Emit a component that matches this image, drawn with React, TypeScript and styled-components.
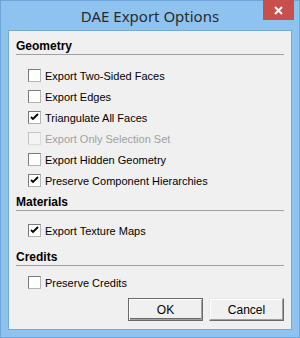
import styled, { createGlobalStyle } from 'styled-components';

const GlobalStyle = createGlobalStyle`
    html, body {
        margin: 0;
        padding: 0;
        background: #ffffff;
    }
`;

const Window = styled.div`
    box-sizing: border-box;
    width: 300px;
    height: 338px;
    background: #8ec3f0;
    border: 1px solid #6fa6da;
    display: flex;
    flex-direction: column;
    padding: 0 7px 7px 7px;
`;

const TitleBar = styled.div`
    position: relative;
    height: 29px;
    display: flex;
    align-items: center;
    justify-content: center;
    font-family: 'Noto Sans', 'Open Sans', sans-serif;
    font-size: 15px;
    color: #2a2a2a;
`;

const CloseButton = styled.div`
    position: absolute;
    top: -1px;
    right: -2px;
    width: 31px;
    height: 20px;
    background: #c7504c;
    display: flex;
    align-items: center;
    justify-content: center;
`;

const Client = styled.div`
    flex: 1;
    background: #f0f0f0;
    border: 1px solid #74a9dc;
    padding: 8px 7px 8px 7px;
    display: flex;
    flex-direction: column;
    font-family: 'Liberation Sans', Arial, sans-serif;
    font-size: 11px;
    color: #000;
`;

const Heading = styled.div<{ $top: number }>`
    margin-top: ${p => p.$top}px;
    font-weight: bold;
    font-size: 12px;
    line-height: 14px;
    padding-bottom: 1px;
    border-bottom: 1px solid #a0a0a0;
`;

const Rows = styled.div<{ $top: number }>`
    margin-top: ${p => p.$top}px;
    display: flex;
    flex-direction: column;
`;

const Row = styled.label<{ $disabled?: boolean }>`
    height: 21px;
    display: flex;
    align-items: center;
    gap: 4px;
    padding-left: 12px;
    color: ${p => (p.$disabled ? '#a0a0a0' : '#000')};
`;

const Box = styled.span<{ $disabled?: boolean }>`
    box-sizing: border-box;
    width: 13px;
    height: 13px;
    background: ${p => (p.$disabled ? '#f4f4f4' : '#ffffff')};
    border: 1px solid;
    border-color: ${p =>
        p.$disabled ? '#c4c4c4 #dcdcdc #dcdcdc #c4c4c4' : '#7a7a7a #b4b4b4 #b4b4b4 #7a7a7a'};
    display: flex;
    align-items: center;
    justify-content: center;
`;

const ButtonRow = styled.div`
    margin-top: auto;
    display: flex;
    justify-content: flex-end;
    gap: 6px;
`;

const Button = styled.button<{ $default?: boolean }>`
    box-sizing: border-box;
    width: 75px;
    height: 23px;
    background: #f0f0f0;
    font-family: 'Liberation Sans', Arial, sans-serif;
    font-size: 12px;
    color: #000;
    padding: 0;
    border: 1px solid;
    border-color: ${p => (p.$default ? '#6a6a6a' : '#e8e8e8 #6a6a6a #6a6a6a #e8e8e8')};
    box-shadow: ${p =>
        p.$default
            ? 'inset 1px 1px 0 #ffffff, inset -1px -1px 0 #a0a0a0, inset 0 -2px 0 #6a6a6a'
            : 'inset -1px -1px 0 #a0a0a0, inset 1px 1px 0 #ffffff'};
`;

type Option = { label: string; checked?: boolean; disabled?: boolean };

const CheckMark = () => (
    <svg width="9" height="9" viewBox="0 0 9 9">
        <path d="M1 4 L3 6 L8 1" stroke="#000" strokeWidth="1.8" fill="none" />
    </svg>
);

const CheckRow = ({ label, checked, disabled }: Option) => (
    <Row $disabled={disabled}>
        <Box $disabled={disabled}>{checked && <CheckMark />}</Box>
        {label}
    </Row>
);

const geometry: Option[] = [
    { label: 'Export Two-Sided Faces' },
    { label: 'Export Edges' },
    { label: 'Triangulate All Faces', checked: true },
    { label: 'Export Only Selection Set', disabled: true },
    { label: 'Export Hidden Geometry' },
    { label: 'Preserve Component Hierarchies', checked: true },
];

const App = (): JSX.Element => (
    <>
        <GlobalStyle />
        <Window>
            <TitleBar>
                DAE Export Options
                <CloseButton>
                    <svg width="9" height="9" viewBox="0 0 9 9">
                        <path d="M1 1 L8 8 M8 1 L1 8" stroke="#fff" strokeWidth="2" />
                    </svg>
                </CloseButton>
            </TitleBar>
            <Client>
                <Heading $top={0}>Geometry</Heading>
                <Rows $top={10}>
                    {geometry.map(o => (
                        <CheckRow key={o.label} {...o} />
                    ))}
                </Rows>
                <Heading $top={4}>Materials</Heading>
                <Rows $top={9}>
                    <CheckRow label="Export Texture Maps" checked />
                </Rows>
                <Heading $top={9}>Credits</Heading>
                <Rows $top={6}>
                    <CheckRow label="Preserve Credits" />
                </Rows>
                <ButtonRow>
                    <Button $default>OK</Button>
                    <Button>Cancel</Button>
                </ButtonRow>
            </Client>
        </Window>
    </>
);

export default App;
